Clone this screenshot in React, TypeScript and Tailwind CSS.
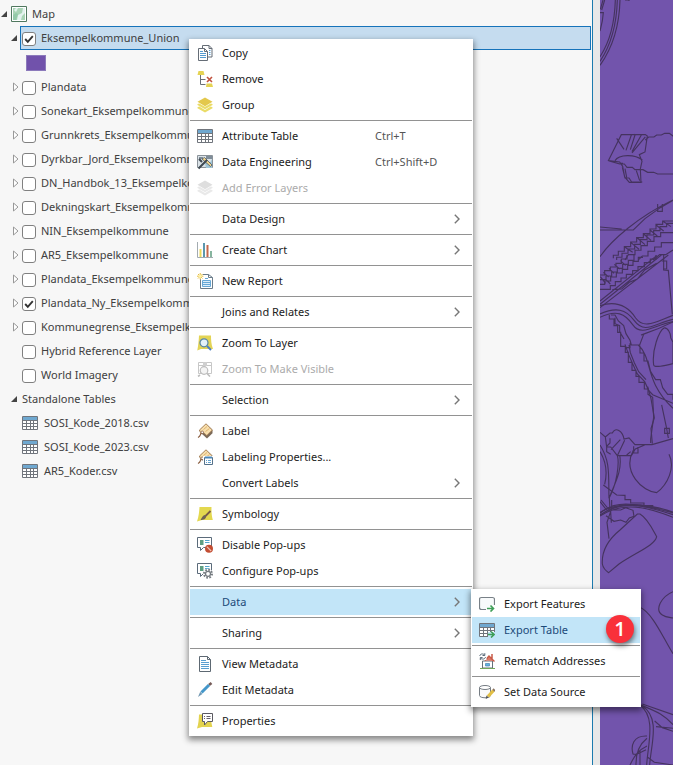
import React from 'react';

type IconName =
  | 'copy' | 'remove' | 'group' | 'table' | 'engineering' | 'errorLayers' | 'chart' | 'report'
  | 'zoomLayer' | 'zoomVisible' | 'label' | 'labelProps' | 'symbology' | 'popupOff' | 'popupConfig'
  | 'metadata' | 'pencil' | 'properties' | 'exportFeatures' | 'exportTable' | 'rematch' | 'dataSource';

interface MenuItem {
  text: string;
  icon?: IconName;
  shortcut?: string;
  submenu?: boolean;
  disabled?: boolean;
  active?: boolean;
}

interface Layer {
  name: string;
  checked?: boolean;
  leaf?: boolean;
}

const Grid = () => (
  <>
    <path d="M.5 1.5h15v13H.5z" fill="#fff" />
    <path d="M1 2h14v3H1z" fill="#6fa8d0" />
    <path d="M.5 1.5h15v13H.5zM.5 5.5h15M.5 8.5h15M.5 11.5h15M4.5 5v9M8.5 5v9M11.5 5v9" fill="none" stroke="#70757c" />
  </>
);

const Bubble = () => (
  <>
    <path d="M.5.5h14v10H6.500l-3 3v-3h-3z" fill="#fff" stroke="#5b6b7a" />
    <path d="M3 3h3.500v5H3z" fill="#5e9e82" />
    <path d="M8 3.500h4.500M8 5.500h4.500" stroke="#55a5cc" />
  </>
);

const Tag = () => (
  <>
    <path d="M2 7.500 9 .8l6.500 6v3.500L10 15.500 5 11z" fill="#7c6a58" />
    <path d="M2.500 7 9 .8 15.300 7 9.800 12.500 6 9l-2 2z" fill="#f7dfae" stroke="#a57b4f" strokeWidth=".8" />
    <path d="m6.500 6.500 3.500-3M8.500 8.500l4-3" stroke="#dcae67" strokeWidth=".9" />
    <circle cx="5.200" cy="9.300" r="1.300" fill="#fff" stroke="#8b5f42" strokeWidth=".8" />
    <path d="M4.500 10C3 11 4 13 1 14.500" fill="none" stroke="#8b5f42" strokeWidth="1.300" />
  </>
);

const Stack = ({ top, low }: { top: string; low: string }) => (
  <>
    <path d="m8 .5 7.500 4.300L8 9.200.5 4.800z" fill={top} />
    <path d="M.5 7 2.300 6.500 8 9.800l5.700-3.300L15.500 7v1L8 12.300.5 8zM.5 10.300l1.800-.7L8 12.900l5.700-3.300 1.800.7v1L8 15.500l-7.500-4.200z" fill={low} />
  </>
);

const icons: Record<IconName, React.ReactNode> = {
  copy: (
    <>
      <path d="M5.500.5h6.500l3 3v8.500H5.500z" fill="#fff" stroke="#656d76" />
      <path d="M12 .5v3h3" fill="none" stroke="#656d76" />
      <path d="M1.500 3.500h6l3 3v9h-9z" fill="#fff" stroke="#656d76" />
      <path d="M7.500 3.500v3h3" fill="none" stroke="#656d76" />
      <path d="M3 6.500h3M3 8.500h6M3 10.500h6M3 12.500h6" stroke="#559bcf" />
      <path d="M12 5.500h1.500M12 7.500h1.500M12 9.500h1.500" stroke="#559bcf" />
    </>
  ),
  remove: (
    <>
      <path d="M1.500 0h5l1 4h-7zM9.500 12.500h5.500l1 3.500H9z" fill="#e5d353" />
      <path d="M3.500 4v9.500h5M3.500 8.500h5" fill="none" stroke="#6a6f77" />
      <path d="m10 6 5 5M15 6l-5 5" stroke="#c1513e" strokeWidth="1.600" />
    </>
  ),
  group: <Stack top="#e3c84c" low="#eadc67" />,
  errorLayers: <Stack top="#dedede" low="#e9e9e9" />,
  table: <Grid />,
  engineering: (
    <>
      <path d="M.5 1.500h15v12H.5z" fill="#dbe3e8" stroke="#8a9299" />
      <path d="M2 3h4v2H2zM9 2h6v3H9zM10 8h5v5h-3z" fill="#7f8d99" />
      <path d="M8 9h5l2-4v9H9z" fill="#9fc6d8" />
      <path d="m5 5 2.500-1.500L15 11l-1.500 1.500z" fill="#f2d58b" stroke="#4f5962" strokeWidth=".8" />
      <path d="M10 6 1.500 14.500M2 5l3 3" stroke="#3f4952" strokeWidth="2" />
    </>
  ),
  chart: (
    <>
      <path d="M.5 0v15.500H16" fill="none" stroke="#a3abb0" />
      <path d="M2.500 7h2v8h-2z" fill="#ecd95a" />
      <path d="M6 1h2v14H6z" fill="#5c97ad" />
      <path d="M9.500 3h2v12h-2z" fill="#c5684d" />
      <path d="M13 9h2v6h-2z" fill="#87b59f" />
    </>
  ),
  report: (
    <>
      <path d="M3.500 1.500h8l4 3v11h-12z" fill="#fff" stroke="#6a7c8a" />
      <path d="M11.500 1.500v3h4" fill="none" stroke="#6a7c8a" />
      <path d="M5.500 7.500h8v6h-8z" fill="#dceefa" stroke="#66a8d6" />
      <path d="M6 9.500h7M6 11.500h7M8 5.500h3" stroke="#66a8d6" />
      <circle cx="3.200" cy="3.200" r="3" fill="#fff" />
      <path d="M3.200 0v6.400M0 3.200h6.400M1 1l4.500 4.500M5.500 1 1 5.500" stroke="#e6bd3f" strokeWidth="1" />
      <circle cx="3.200" cy="3.200" r="1.500" fill="#fff2a8" />
    </>
  ),
  zoomLayer: (
    <>
      <path d="M2 .500h12c0 4 .2 9 2 13.500H4L.3 15.500C1.300 10 1.800 5 2 .500z" fill="#e3d455" />
      <circle cx="7" cy="7.800" r="4" fill="#e4f1f8" stroke="#5684a4" strokeWidth="1.200" />
      <path d="m10 11 4 4" stroke="#4e7fc0" strokeWidth="2" />
    </>
  ),
  zoomVisible: (
    <>
      <path d="M1.500 1.500h13v11h-13zM1.500 4.500h13" fill="none" stroke="#c7c7c7" />
      <path d="M6 1h4v4H6z" fill="#cfcfcf" />
      <circle cx="7" cy="9.500" r="3.800" fill="#f4f4f4" stroke="#bcbcbc" strokeWidth="1.200" />
      <path d="m10 12.500 3 3M3 14l-2 1.500" stroke="#bcbcbc" strokeWidth="1.600" />
    </>
  ),
  label: <Tag />,
  labelProps: (
    <>
      <Tag />
      <path d="M6 7h10v9H6z" fill="#fff" />
      <path d="M7.500 8.500h8v7h-8z" fill="#fff" stroke="#55718a" />
      <path d="M8 8.500h7" stroke="#4a86b8" strokeWidth="2" />
      <path d="M9 11.500h1M9 13.500h1M11 11.500h3M11 13.500h3" stroke="#62a2d0" />
    </>
  ),
  symbology: (
    <>
      <path d="M2.500 1h12c-.2 5 .3 9 1.300 13H5l-5 1.500C2 10 2.200 5 2.500 1z" fill="#e3d84f" />
      <path d="m13.500 5-5 5" stroke="#775948" strokeWidth="1.800" />
      <path d="M8.500 9C6 8.500 5.500 11 3.500 14c3 0 6-1 5.500-4" fill="#6f6254" />
    </>
  ),
  popupOff: (
    <>
      <Bubble />
      <circle cx="12" cy="11.800" r="4" fill="#c34d32" />
      <path d="m9.800 9.600 4.400 4.400" stroke="#f0c3b5" strokeWidth="1.200" />
    </>
  ),
  popupConfig: (
    <>
      <Bubble />
      <circle cx="11" cy="10.800" r="5" fill="#fff" />
      <circle cx="11" cy="10.800" r="4" fill="none" stroke="#757b80" strokeWidth="2" strokeDasharray="1.700 1.400" />
      <circle cx="11" cy="10.800" r="2.500" fill="#fff" stroke="#757b80" strokeWidth="1.300" />
    </>
  ),
  metadata: (
    <>
      <path d="M2.500.5h8l3 3v12h-11z" fill="#fff" stroke="#5d6872" />
      <path d="M10.500.5v3h3" fill="none" stroke="#5d6872" />
      <path d="M4 4.500h5M4 6.500h8M4 8.500h8M4 10.500h8M4 12.500h8" stroke="#5b9fd1" />
    </>
  ),
  pencil: (
    <>
      <path d="M12 3 14.500 1" stroke="#755b58" strokeWidth="2.600" />
      <path d="M4.500 10.500 12 3" stroke="#4497ca" strokeWidth="3" />
      <path d="m3.200 9.800 2.200 2.200L1 15z" fill="#7298b3" />
    </>
  ),
  properties: (
    <>
      <path d="M2 1.500h12c-.2 5 .3 8 1.300 12.500H5l-5 1.500C1.500 11 1.800 6 2 1.500z" fill="#e3d34f" />
      <path d="M5.500.5h10v8h-5L7.500 12V8.500h-2z" fill="#fff" stroke="#5b5961" />
      <path d="M7 3.500h1M7 5.500h1M9.500 3.500h4M9.500 5.500h4" stroke="#665f6b" />
    </>
  ),
  exportFeatures: (
    <>
      <path d="M7 13.500H2.500q-2 0-2-2v-8q0-2 2-2h11q2 0 2 2V9" fill="#f8fafb" stroke="#788087" strokeWidth="1.200" />
      <path d="M8 12.500h6M11.500 9.500l3 3-3 3" fill="none" stroke="#3f9f58" strokeWidth="1.600" />
    </>
  ),
  exportTable: (
    <>
      <Grid />
      <path d="M9 10h7v6H9z" fill="#c2e5f8" />
      <path d="M9 12.500h6M12 9.500l3 3-3 3" fill="none" stroke="#3f9f58" strokeWidth="1.600" />
    </>
  ),
  rematch: (
    <>
      <path d="M3.500 8h10v7h-10z" fill="#fff" stroke="#65717a" />
      <path d="M6 7.500 10 3l5 5z" fill="#dd7866" />
      <path d="M6 7.500 10 3l5.500 5.500M13 1v5" fill="none" stroke="#c75a47" strokeWidth="1.500" />
      <path d="M6.500 10.500h4v2.500h-4z" fill="#64b2e1" stroke="#4385b5" strokeWidth=".7" />
      <path d="M1 15.500h15" stroke="#73a75c" />
      <path d="M0 0h7.500v7H0z" fill="#fff" />
      <path d="M.8 3C1 .8 4 .2 5.500 2M5.800.2v2.300H3.500M6.500 4C6 6.400 3 6.700 1.500 5M1.300 7V4.600h2.300" fill="none" stroke="#566675" />
    </>
  ),
  dataSource: (
    <>
      <path d="M.5 3.500v8c0 3 11 3 11 0v-8" fill="#fafafa" stroke="#767d84" />
      <ellipse cx="6" cy="3.500" rx="5.500" ry="2" fill="#fff" stroke="#767d84" />
      <path d="m14.500 6.500-5.500 6" stroke="#e2bf45" strokeWidth="3.200" />
      <path d="m14 5 2 2" stroke="#8b725f" strokeWidth="1.800" />
      <path d="m7.500 11.500 2.200 2-3 1.500z" fill="#535353" />
    </>
  ),
};

const Icon = ({ name }: { name: IconName }) => (
  <svg viewBox="0 0 16 16" className="size-4 shrink-0" fill="none" aria-hidden="true">
    {icons[name]}
  </svg>
);

const contextMenu: MenuItem[][] = [
  [
    { text: 'Copy', icon: 'copy' },
    { text: 'Remove', icon: 'remove' },
    { text: 'Group', icon: 'group' },
  ],
  [
    { text: 'Attribute Table', icon: 'table', shortcut: 'Ctrl+T' },
    { text: 'Data Engineering', icon: 'engineering', shortcut: 'Ctrl+Shift+D' },
    { text: 'Add Error Layers', icon: 'errorLayers', disabled: true },
  ],
  [{ text: 'Data Design', submenu: true }],
  [{ text: 'Create Chart', icon: 'chart', submenu: true }],
  [{ text: 'New Report', icon: 'report' }],
  [{ text: 'Joins and Relates', submenu: true }],
  [
    { text: 'Zoom To Layer', icon: 'zoomLayer' },
    { text: 'Zoom To Make Visible', icon: 'zoomVisible', disabled: true },
  ],
  [{ text: 'Selection', submenu: true }],
  [
    { text: 'Label', icon: 'label' },
    { text: 'Labeling Properties...', icon: 'labelProps' },
    { text: 'Convert Labels', submenu: true },
  ],
  [{ text: 'Symbology', icon: 'symbology' }],
  [
    { text: 'Disable Pop-ups', icon: 'popupOff' },
    { text: 'Configure Pop-ups', icon: 'popupConfig' },
  ],
  [{ text: 'Data', submenu: true, active: true }],
  [{ text: 'Sharing', submenu: true }],
  [
    { text: 'View Metadata', icon: 'metadata' },
    { text: 'Edit Metadata', icon: 'pencil' },
  ],
  [{ text: 'Properties', icon: 'properties' }],
];

const dataMenu: MenuItem[][] = [
  [
    { text: 'Export Features', icon: 'exportFeatures' },
    { text: 'Export Table', icon: 'exportTable', active: true },
  ],
  [{ text: 'Rematch Addresses', icon: 'rematch' }],
  [{ text: 'Set Data Source', icon: 'dataSource' }],
];

const layers: Layer[] = [
  { name: 'Plandata' },
  { name: 'Sonekart_Eksempelkommune' },
  { name: 'Grunnkrets_Eksempelkommune' },
  { name: 'Dyrkbar_Jord_Eksempelkommune' },
  { name: 'DN_Handbok_13_Eksempelkommune' },
  { name: 'Dekningskart_Eksempelkommune' },
  { name: 'NIN_Eksempelkommune' },
  { name: 'AR5_Eksempelkommune' },
  { name: 'Plandata_Eksempelkommune' },
  { name: 'Plandata_Ny_Eksempelkommune', checked: true },
  { name: 'Kommunegrense_Eksempelkommune' },
  { name: 'Hybrid Reference Layer', leaf: true },
  { name: 'World Imagery', leaf: true },
];

const tables = ['SOSI_Kode_2018.csv', 'SOSI_Kode_2023.csv', 'AR5_Koder.csv'];

const Menu = ({ groups, label, className }: { groups: MenuItem[][]; label: string; className: string }) => (
  <div
    role="menu"
    aria-label={label}
    className={`absolute bg-white px-px text-[#1c1c1c] shadow-[0_3px_6px_1px_rgba(0,0,0,0.45)] ${className}`}
  >
    {groups.map((group, index) => (
      <div key={group[0].text}>
        {index > 0 && <hr className="my-0.5 border-t border-[#929292]" />}
        {group.map((item) => (
          <button
            key={item.text}
            type="button"
            role="menuitem"
            disabled={item.disabled}
            className={`flex h-[26px] w-full items-center pl-[7px] text-left whitespace-nowrap ${
              item.active ? 'bg-[#c2e5f8] text-[#1c4a78]' : ''
            } ${item.disabled ? 'text-[#ababab]' : ''}`}
          >
            <span className="mr-[9px] size-4 shrink-0">{item.icon && <Icon name={item.icon} />}</span>
            <span className="flex-1">{item.text}</span>
            {item.shortcut && <span className="w-[97px] text-[#555]">{item.shortcut}</span>}
            {item.submenu && (
              <svg viewBox="0 0 6 10" className="mr-3 h-2.5 w-1.5" fill="none" stroke="#777" strokeWidth="1.4">
                <path d="m.8.800 4.200 4.200-4.200 4.200" />
              </svg>
            )}
          </button>
        ))}
      </div>
    ))}
  </div>
);

const Arrow = ({ open }: { open?: boolean }) => (
  <svg viewBox="0 0 8 10" className="h-2.5 w-2 shrink-0" aria-hidden="true">
    {open ? <path d="M7 2v6H1z" fill="#444" /> : <path d="M2.500 1v8l4.500-4z" fill="#fff" stroke="#999" />}
  </svg>
);

const LayerCheck = ({ name, checked }: { name: string; checked?: boolean }) => (
  <label className="flex items-center gap-[5px] whitespace-nowrap">
    <span className="grid size-3.5 shrink-0 translate-y-px">
      <input
        type="checkbox"
        defaultChecked={checked}
        className="peer col-start-1 row-start-1 size-3.5 appearance-none rounded-[3px] border border-[#808080] bg-white"
      />
      <svg viewBox="0 0 14 14" className="pointer-events-none invisible col-start-1 row-start-1 size-3.5 peer-checked:visible" fill="none">
        <path d="m3.200 7 2.600 2.800 5-5.600" stroke="#333" strokeWidth="1.900" />
      </svg>
    </span>
    {name}
  </label>
);

const ContentsPane = () => (
  <aside className="min-w-0 border-r border-[#1b7aae] bg-[#f7f7f7] pt-0.5 text-[#404040]">
    <div className="flex h-6 items-center">
      <Arrow open />
      <svg viewBox="0 0 16 16" className="mr-[5px] ml-[3px] size-4" aria-hidden="true">
        <path d="M.5.5h15v15H.5z" fill="#fff" stroke="#50785f" />
        <path d="M2 2h12v12H2z" fill="#a9d4b5" />
        <path d="m6 14 1-5 4-2 1-5h2v5l-3 3-1 4zM3 4l2-2h2L5 6z" fill="#e3f2ee" />
        <path d="M2 9l3-2 2 1-2 6H2z" fill="#93c9a8" />
      </svg>
      Map
    </div>
    <div className="flex h-6 items-center pl-2.5">
      <Arrow open />
      <div className="mr-px ml-0.5 flex h-6 flex-1 items-center border border-[#1673ba] bg-[#c5dcef] pl-px">
        <LayerCheck name="Eksempelkommune_Union" checked />
      </div>
    </div>
    <div className="flex h-[25px] items-center pl-[26px]">
      <span className="h-4 w-5 border border-[#8c7abb] bg-[#7152ab]" />
    </div>
    <ul>
      {layers.map((layer) => (
        <li key={layer.name} className="flex h-6 items-center gap-[3px] pl-[11px]">
          {layer.leaf ? <span className="w-2" /> : <Arrow />}
          <LayerCheck name={layer.name} checked={layer.checked} />
        </li>
      ))}
    </ul>
    <div className="flex h-6 items-center gap-1 pl-2.5">
      <Arrow open />
      Standalone Tables
    </div>
    <ul>
      {tables.map((table) => (
        <li key={table} className="flex h-6 items-center gap-1.5 pl-[22px]">
          <Icon name="table" />
          {table}
        </li>
      ))}
    </ul>
  </aside>
);

// Outlines of the polygons in the map view, grouped in thirds from north to south
const MapView = () => (
  <svg viewBox="0 0 73 765" preserveAspectRatio="xMinYMin slice" className="h-full w-full bg-[#7254ac]" role="img" aria-label="Map">
    <g fill="none" stroke="#45335f" strokeWidth="3.400">
      <g transform="translate(-15 0) scale(.3333)">
        <path d="M54 0 46 28M59 0 50 30M91 0C89 70 75 125 45 170M97 0C95 72 80 132 45 184M105 0C103 80 85 140 45 196" />
        <path d="M45 38h10l-3 25-7 30M120 0h12v3" />
        <path d="m70 482 39-78h72l6 4-7 48-17 8 8 20-5 23 2 40h-35l-14-16-6-32-9-13zM95 415l22 33M139 405l-16 46M151 402l-15 47M169 405l-28 50M181 411l-40 48M90 482c12-20 60-20 82-2M70 482l34 10h14l8 10h16l8 7h24l14 8h18l12 5h46M112 502l8 32h12l8 12h32M120 506l5 26M154 512l10 30M104 490h10M181 420l10-9h16l8-6h14l10-5h14l14 10h4" />
        <path d="M45 690h100l35-34 46-33 38-22M45 770C80 720 160 650 264 600M45 681l65 6M218 612v22h14v-22" />
        <path d="M85 775v-9h15v-12h18v-14h19v-14h18v-13h20v-12h20v-14h18v-14h20v-10h31M95 780v-8h16v-12h18v-13h20v-14h17v-14h20v-14h20v-13h19v-12h20v-10h19M120 780l10-16h20v-13h18v-14h19v-13h20v-14h20v-12h37M120 742l23 15M138 728l24 20M157 714l23 20M176 702l22 19M195 690l22 18M214 676l22 17M234 664l24 16M160 780l12-12h17v-14h20v-13h20v-13h35M204 780l20-16h18l22-14" />
      </g>
      <g transform="translate(-15 255) scale(.3333)">
        <path d="M45 60h14V47h17V36h17V25h16V12h17V0M45 74h18V63h17V51h17V40h16V28h17V16h17V0M45 88h14V78h18V66h17V54h18V43h16V31h16V19h16V7h14M45 103h31V92h15V80h17V69h16V58h19V47h16V35h19V23h18V12h17V0M55 52l16 14M72 40l15 15M88 28l16 14M106 17l16 14M46 65l16 20M64 75l12 12" />
        <path d="M45 138 215 2M45 148 229 0M45 158 250 0M82 104l28-2 23-20 24-10 22-27 36-20" />
        <path d="M236 0v45l14 1 12 132" />
        <path d="M45 152C108 132 137 166 152 189c26 37 66 8 112-8M45 177c47-22 78-15 103 20 32 43 62 7 116-4M45 187c50-24 75-11 98 22 26 38 65 1 121-9" />
        <path d="M73 180v12h14v20h11v20h9v42h14v18h9v30h11v24h12v18h9v18h16v20h11v16l14 9 3 60-9 65v12M78 180h12l10 18 16 14 7 24 12 20 4 14h25l12-32 25-10M90 188v18l14 6v18l13 22M120 268l11 31 14 32 12 26 22 23 12 26 12 13 61 26M132 270l4 23 12 30 13 27 22 24M160 270c45 42 15 105 104 190M165 272v22h12v24h12l8 32 15 24h14l7 24 15 20h16v16M120 278h15v-13M168 240c23-8 50-16 96-39M230 18h15v24h-9" />
        <path d="M206 330C200 285 222 228 237 219c12-2 21 18 20 29l7 14v64c-25 6-57 13-58 4zM188 395l10 36 10 58-10 32 4 45M230 450l14 66 6 33M239 520h14v15h-14z" />
        <path d="m45 532 16 14 14-12h7c9-20 31-6 35 18l15-3 18 20h51l63-18M61 546l4 30h12l20 26h42l12-20 28-12M106 554l-28 30M119 556l-22 46M97 602c7 23-2 86-24 126M104 600c9 48-16 87-32 130M75 550v14l-10 10v16l12 8M146 574v20h13v-18M125 600l12-10M45 570c32 50 25 93 27 160M45 590c18 30 22 66 14 98" />
        <path d="M145 586c-35 65 29 125 70 127 33-24 57-76 37-115M45 780c70-49 156-23 219-6M45 772c60-34 136-28 219-1M55 690l40 30 25 1v13h17v10h40v8h28M73 728l2 38M45 740l22 28" />
      </g>
      <g transform="translate(-15 500) scale(.3333)">
        <path d="M45 40C96-6 162 12 264 44M45 48C115 2 190 22 264 52M48 0l29 35 2 33M80 0v25l-14 42 6 49M77 30h30l15-7 22 8 3 18-14 5-10 13-16-7-20 4-24-17" />
        <path d="M52 192C50 160 62 125 105 90L157 42h8c24 14 41 52 50 68-5 26-60 46-113 82l-31 26C62 212 54 202 52 192M264 275c-36 15-56 55-32 70 10 7 20 7 32 9M165 322c38 17 69 91 99 139" />
        <path d="M165 616c49 35 24 115 20 179M172 618c55 35 26 115 22 177M165 614c58 24 72 31 99 60M172 612l92 32M209 663l23 20 32 11M186 708c-42-2-49 30-42 54 10 5 26-6 39-13M186 715c-20 16-34 40-33 80M186 738c-25 12-36 27-51 57M165 750v45M188 772l20 15 56 8M213 680l51 5" />
      </g>
    </g>
  </svg>
);

const App: React.FC = () => {
  return (
    <main className="relative grid min-h-screen grid-cols-[593fr_7px_73fr] overflow-hidden bg-[#e8e8e8] font-['Segoe_UI','Noto_Sans',sans-serif] text-[11px]">
      <ContentsPane />
      <div className="bg-[#e8e8e8]" />
      <div className="relative">
        <div className="absolute inset-0">
          <MapView />
        </div>
      </div>
      <Menu groups={contextMenu} label="Layer" className="top-[39px] left-[189px] w-[284px] pt-px pb-0.5" />
      <Menu groups={dataMenu} label="Data" className="top-[589px] left-[471px] w-[170px] pt-0.5 pb-0.5" />
      <span className="absolute top-[615px] left-[606px] flex size-7 items-center justify-center rounded-full bg-[#f9303a] font-['Open_Sans',sans-serif] text-xl font-semibold text-white shadow-[1px_3px_5px_rgba(0,0,0,0.5)]">
        1
      </span>
    </main>
  );
};

export default App;
